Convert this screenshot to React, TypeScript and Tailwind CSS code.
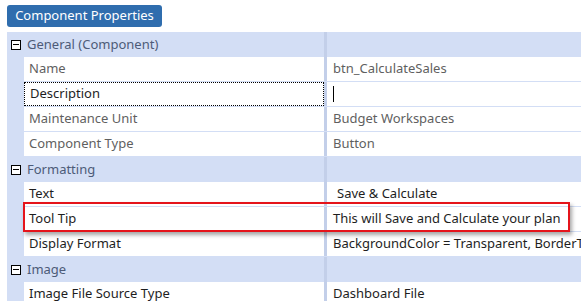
type Row =
  | { kind: "header"; title: string }
  | {
      kind: "prop";
      label: string;
      value: string;
      readOnly?: boolean;
      focused?: boolean;
      indent?: boolean;
    };

const rows: Row[] = [
  { kind: "header", title: "General (Component)" },
  { kind: "prop", label: "Name", value: "btn_CalculateSales", readOnly: true },
  { kind: "prop", label: "Description", value: "", focused: true },
  { kind: "prop", label: "Maintenance Unit", value: "Budget Workspaces", readOnly: true },
  { kind: "prop", label: "Component Type", value: "Button", readOnly: true },
  { kind: "header", title: "Formatting" },
  { kind: "prop", label: "Text", value: "Save & Calculate", indent: true },
  { kind: "prop", label: "Tool Tip", value: "This will Save and Calculate your plan" },
  {
    kind: "prop",
    label: "Display Format",
    value: "BackgroundColor = Transparent, BorderThickness = 0",
  },
  { kind: "header", title: "Image" },
  { kind: "prop", label: "Image File Source Type", value: "Dashboard File" },
];

function CollapseIcon() {
  return (
    <span className="relative block h-[10px] w-[10px] border border-black bg-white">
      <span className="absolute left-[1px] right-[1px] top-[3.5px] h-px bg-black" />
    </span>
  );
}

function Divider() {
  return <div className="w-[3px] shrink-0 self-stretch bg-[#c3cfe9]" />;
}

function HeaderRow({ title }: { title: string }) {
  return (
    <div className="flex h-[25px] items-stretch">
      <div className="flex w-[300px] shrink-0 items-center pl-[4px]">
        <CollapseIcon />
        <span className="ml-[6px] text-[#4d5b78]">{title}</span>
      </div>
      <div className="w-[17px] shrink-0" />
      <Divider />
      <div className="flex-1" />
    </div>
  );
}

function PropRow({
  label,
  value,
  readOnly,
  focused,
  indent,
}: {
  label: string;
  value: string;
  readOnly?: boolean;
  focused?: boolean;
  indent?: boolean;
}) {
  const text = readOnly ? "text-[#5f5f5f]" : "text-[#1e1e1e]";
  return (
    <div className="mb-px flex h-[24px] items-stretch">
      <div className="w-[17px] shrink-0" />
      <div
        className={`flex w-[300px] shrink-0 items-center bg-white pl-[5px] ${text} ${
          focused ? "border border-dotted border-black pl-[4px]" : ""
        }`}
      >
        {label}
      </div>
      <Divider />
      <div
        className={`flex flex-1 items-center overflow-hidden whitespace-nowrap bg-white ${
          indent ? "pl-[10px]" : "pl-[6px]"
        } ${text}`}
      >
        {focused ? <span className="h-[16px] w-px bg-black" /> : value}
      </div>
    </div>
  );
}

export default function App() {
  return (
    <div
      className="relative h-[301px] w-[581px] overflow-hidden bg-white text-[13px]"
      style={{ fontFamily: '"Noto Sans", "Open Sans", sans-serif' }}
    >
      <div className="pl-[7px] pt-[5px]">
        <div className="flex h-[22px] w-[155px] items-center justify-center rounded-[3px] bg-[#2f6dae] text-white">
          Component Properties
        </div>
      </div>

      <div className="ml-[7px] mt-[5px] bg-[#d3def5]">
        {rows.map((r, i) =>
          r.kind === "header" ? (
            <HeaderRow key={i} title={r.title} />
          ) : (
            <PropRow key={i} {...r} />
          )
        )}
      </div>

      {/* highlight around Tool Tip */}
      <div className="pointer-events-none absolute left-[23px] top-[202px] h-[30px] w-[547px] border-2 border-[#e5141b] shadow-[2px_3px_4px_rgba(0,0,0,0.35)]" />
    </div>
  );
}
